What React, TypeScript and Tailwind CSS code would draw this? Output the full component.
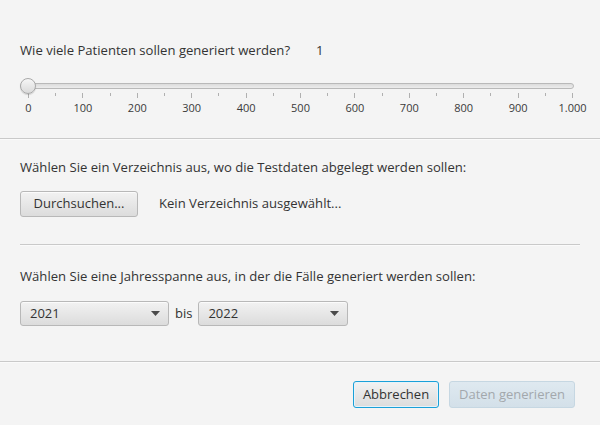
import React from "react";

const ticks = [0, 100, 200, 300, 400, 500, 600, 700, 800, 900, 1000];

const fmt = (n: number) => (n === 1000 ? "1.000" : String(n));

const Slider = () => {
  // 0 -> 8px, 1000 -> 552px inside the 560px box
  const pos = (v: number) => 8 + (v / 1000) * 544;
  return (
    <div className="relative ml-5 w-[560px] h-[44px]">
      {/* track */}
      <div className="absolute left-0 top-[5px] w-[554px] h-[6px] rounded-full border border-[#b9b9b9] bg-gradient-to-b from-[#dcdcdc] to-[#ececec]" />
      {/* ticks */}
      {ticks.map((t) => (
        <div
          key={t}
          className="absolute top-[15px] w-px h-[5px] bg-[#b0b0b0]"
          style={{ left: pos(t) }}
        />
      ))}
      {ticks.slice(0, -1).map((t) => (
        <div
          key={"m" + t}
          className="absolute top-[15px] w-px h-[3px] bg-[#b0b0b0]"
          style={{ left: pos(t + 50) }}
        />
      ))}
      {/* labels */}
      {ticks.map((t) => (
        <span
          key={"l" + t}
          className="absolute top-[23px] -translate-x-1/2 text-[11px] leading-[14px] text-[#3a3a3a]"
          style={{ left: pos(t) + 0.5 }}
        >
          {fmt(t)}
        </span>
      ))}
      {/* thumb */}
      <div className="absolute left-0 top-0 w-[16px] h-[16px] rounded-full border border-[#a9a9a9] bg-gradient-to-b from-[#f6f6f6] to-[#dadada] shadow-[0_1px_1px_rgba(0,0,0,0.15)]" />
    </div>
  );
};

const Combo = ({ value, width }: { value: string; width: string }) => (
  <div
    className={`${width} h-[25px] flex items-center justify-between pl-[9px] pr-[8px] rounded-[3px] border border-[#b8b8b8] bg-gradient-to-b from-[#f2f2f2] to-[#dcdcdc] shadow-[inset_0_1px_0_#fbfbfb]`}
  >
    <span className="text-[13px] text-[#333]">{value}</span>
    <svg width="9" height="5" viewBox="0 0 9 5">
      <path d="M0 0 H9 L4.5 5 Z" fill="#4a4a4a" />
    </svg>
  </div>
);

const Separator = ({ className = "" }: { className?: string }) => (
  <div className={`h-[2px] border-t border-[#c9c9c9] border-b border-b-[#fafafa] ${className}`} />
);

export default function App() {
  return (
    <div
      className="w-[600px] h-[425px] bg-[#f4f4f4] text-[#333] flex flex-col overflow-hidden"
      style={{ fontFamily: '"Open Sans", "Noto Sans", sans-serif' }}
    >
      {/* anzahl patienten */}
      <div className="h-[138px] pt-[42px]">
        <div className="flex items-center h-[18px] px-5 text-[13.1px]">
          <span className="w-[296px]">Wie viele Patienten sollen generiert werden?</span>
          <span>1</span>
        </div>
        <div className="mt-[18px]">
          <Slider />
        </div>
      </div>
      <Separator />

      {/* verzeichnis */}
      <div className="px-5 h-[104px] flex flex-col">
        <div className="mt-[19px] h-[18px] flex items-center text-[13.1px]">
          Wählen Sie ein Verzeichnis aus, wo die Testdaten abgelegt werden sollen:
        </div>
        <div className="mt-[14px] flex items-center gap-[21px]">
          <button className="w-[118px] h-[26px] rounded-[3px] border border-[#b8b8b8] bg-gradient-to-b from-[#f2f2f2] to-[#dcdcdc] shadow-[inset_0_1px_0_#fbfbfb] text-[13px] text-[#333]">
            Durchsuchen...
          </button>
          <span className="text-[13.1px]">Kein Verzeichnis ausgewählt...</span>
        </div>
      </div>
      <Separator className="mx-5" />

      {/* jahresspanne */}
      <div className="px-5 h-[115px] flex flex-col">
        <div className="mt-[22px] h-[18px] flex items-center text-[13.1px]">
          Wählen Sie eine Jahresspanne aus, in der die Fälle generiert werden sollen:
        </div>
        <div className="mt-[15px] flex items-center">
          <Combo value="2021" width="w-[149px]" />
          <span className="mx-[6px] text-[13px]">bis</span>
          <Combo value="2022" width="w-[150px]" />
        </div>
      </div>
      <Separator />

      {/* buttons */}
      <div className="flex justify-end gap-[10px] pr-[25px] mt-[18px]">
        <button className="w-[86px] h-[27px] rounded-[3px] border border-[#1aa0d8] bg-gradient-to-b from-[#f2f2f2] to-[#dcdcdc] shadow-[inset_0_0_0_1px_#e6f3fa] text-[13px] text-[#333]">
          Abbrechen
        </button>
        <button className="w-[126px] h-[27px] rounded-[3px] border border-[#c6d7e2] bg-gradient-to-b from-[#dfe9f0] to-[#d3e0e9] text-[13px] text-[#a3a8ac]">
          Daten generieren
        </button>
      </div>
    </div>
  );
}
